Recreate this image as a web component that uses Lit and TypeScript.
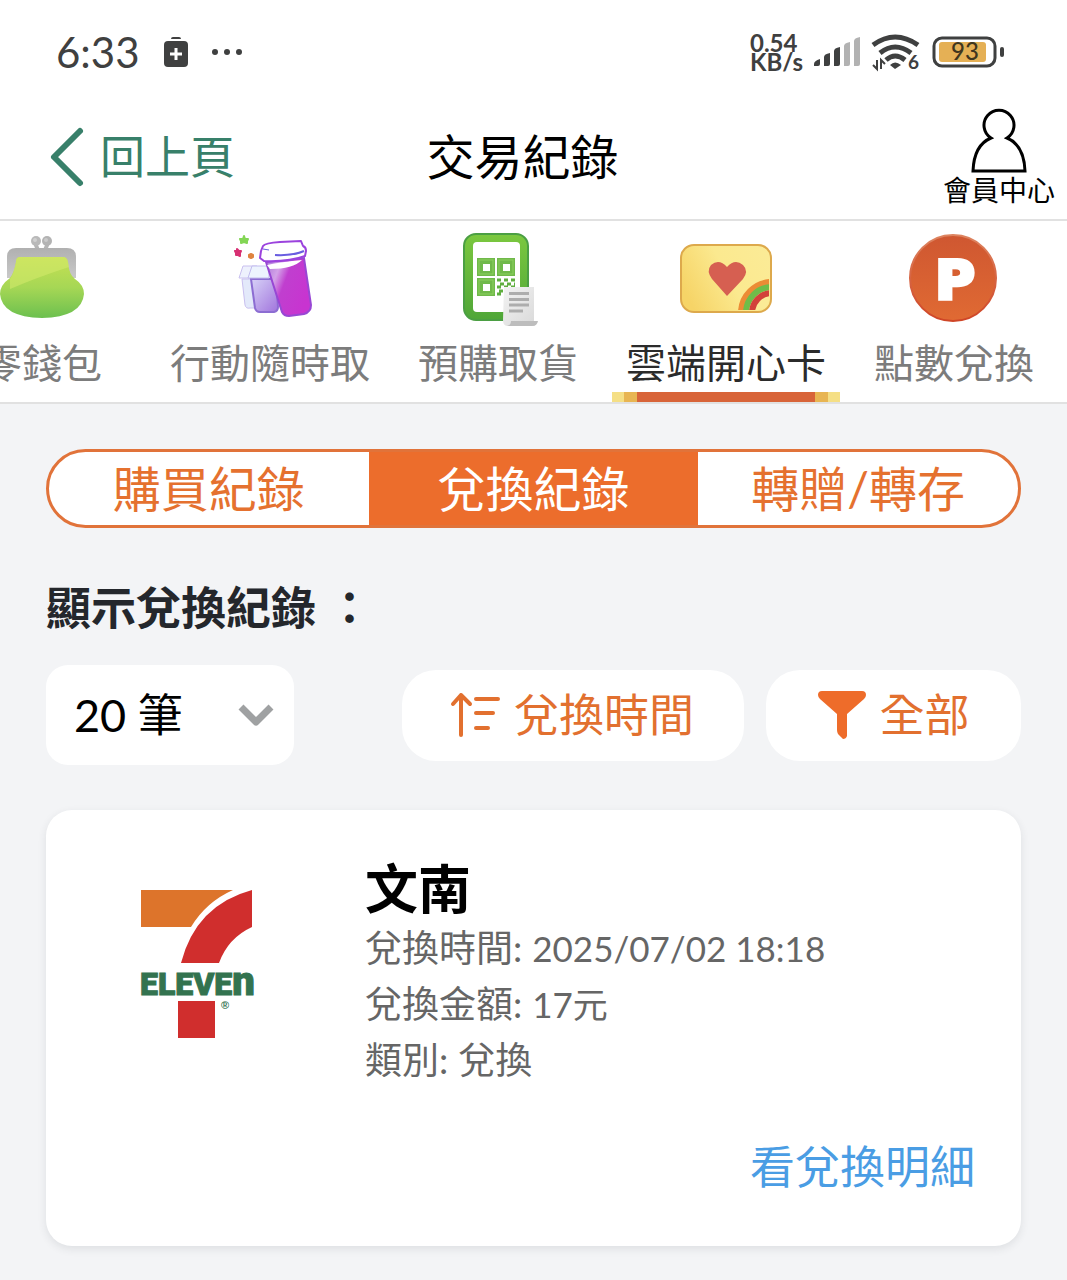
import { LitElement, html, svg, css } from "lit";
import { customElement, state } from "lit/decorators.js";
import { classMap } from "lit/directives/class-map.js";

const purseIcon = html`<svg class="icon" viewBox="-4 230 96 96" aria-hidden="true">
  <defs>
    <linearGradient id="purse-body" x1="0" y1="0" x2="0" y2="1">
      <stop offset="0" stop-color="#c6e052" /><stop offset="0.5" stop-color="#a6d755" /><stop offset="1" stop-color="#6cc04f" />
    </linearGradient>
    <linearGradient id="purse-frame" x1="0" y1="0" x2="0" y2="1">
      <stop offset="0" stop-color="#b0b0b0" /><stop offset="1" stop-color="#c9c9c9" />
    </linearGradient>
  </defs>
  <path d="M37 243l3 7M50 243l-3 7" stroke="#b5b5b5" stroke-width="4" />
  <circle cx="38" cy="241" r="5" fill="#b9b9b9" /><circle cx="49" cy="241" r="5" fill="#b3b3b3" />
  <circle cx="37" cy="240" r="2" fill="#d0d0d0" /><circle cx="48" cy="240" r="2" fill="#cacaca" />
  <path d="M9 278V257q0-9 9-9H69q9 0 9 9V278Z" fill="url(#purse-frame)" />
  <path d="M22 257H65Q69 257 70 262Q71 275 77 279Q86 285 86 294Q84 317 44 318Q4 317 2 294Q2 285 12 278Q16 273 18 262Q18 257 22 257Z" fill="url(#purse-body)" />
  <path d="M22 257H65Q69 257 70 262L71 267Q40 277 12 289V279Q16 273 18 262Q18 257 22 257Z" fill="#d2ea6b" opacity="0.6" />
</svg>`;

const cupsIcon = html`<svg class="icon" viewBox="223 230 96 96" aria-hidden="true">
  <defs>
    <linearGradient id="cup-front" x1="0" y1="0" x2="1" y2="0.5">
      <stop offset="0" stop-color="#a873d8" /><stop offset="0.3" stop-color="#d3a2e8" /><stop offset="0.5" stop-color="#c03fcf" /><stop offset="1" stop-color="#c834d0" />
    </linearGradient>
    <linearGradient id="cup-back" x1="0" y1="0" x2="1" y2="1">
      <stop offset="0" stop-color="#d7d2f7" /><stop offset="1" stop-color="#a174dd" />
    </linearGradient>
  </defs>
  <g stroke-width="2" stroke-linejoin="round">
    <path d="M245 236l1 3 3 0-1 2 0 2-3-1-3 1 0-2-1-2 3 0z" fill="#83d655" stroke="#83d655" />
    <path d="M238 249l2 2 2 0-1 2 0 3-2-1-2 0 0-2-1-2 2 0z" fill="#d73073" stroke="#d73073" />
    <path d="M252 254l2 1 0 2-2 1-2-1 0-2z" fill="#df8440" stroke="#df8440" />
  </g>
  <path d="M243 279L246 305Q247 309 251 308H258L254 279Z" fill="#e3e9fa" stroke="#c9c0ef" />
  <path d="M242 272l2-6H258V278H240Z" fill="#eef1fd" stroke="#c9c0ef" />
  <path d="M252 279L256 308Q257 312 261 312H275Q279 311 279 307L277 279Z" fill="url(#cup-back)" stroke="#8c6dd2" stroke-width="2" />
  <path d="M251 272l2-6H270V278H249Z" fill="#edf4fe" stroke="#c2bcee" />
  <path d="M267 262L283 312Q285 316 290 316L305 314Q312 312 312 305L305 258Z" fill="url(#cup-front)" stroke="#9847d4" stroke-width="2" />
  <path d="M268 265Q282 262 303 260Q294 269 271 269Z" fill="#fff" />
  <path d="M264 246Q266 243 281 242L302 241L304 246Q307 247 307 251L306 256Q290 262 265 261L261 258L262 251Z" fill="#fff" stroke="#9b43dd" stroke-width="2" stroke-linejoin="round" />
  <path d="M276 255Q294 256 305 251" fill="none" stroke="#695de0" stroke-width="2" />
  <path d="M264 249l6 1" stroke="#695de0" stroke-width="1" />
</svg>`;

const finder = (x: number, y: number) => svg`
  <rect x=${x} y=${y} width="18" height="18" fill="#70b94a" />
  <rect x=${x + 2} y=${y + 2} width="14" height="14" fill="none" stroke="#8bd05f" />
  <rect x=${x + 6} y=${y + 6} width="7" height="7" fill="#fff" />`;

const qrIcon = html`<svg class="icon" viewBox="451 230 96 96" aria-hidden="true">
  <defs>
    <linearGradient id="phone" x1="0" y1="0" x2="0" y2="1">
      <stop offset="0" stop-color="#7cc83f" /><stop offset="1" stop-color="#4fa638" />
    </linearGradient>
    <linearGradient id="paper" x1="0" y1="0" x2="1" y2="1">
      <stop offset="0" stop-color="#f3f3f3" /><stop offset="1" stop-color="#d8d8d8" />
    </linearGradient>
  </defs>
  <rect x="465" y="234" width="64" height="86" rx="12" fill="url(#phone)" stroke="#4b9f43" stroke-width="2" />
  <rect x="474" y="242" width="47" height="70" rx="4" fill="#fff" />
  ${finder(478, 258)}${finder(498, 258)}${finder(478, 278)}
  <path d="M498 280h18M501 284h15M498 287h18M500 291h12M498 294h8" stroke="#5fae3f" stroke-width="3" stroke-dasharray="4 3" />
  <path d="M505 287H535V321H538Q539 326 533 326H509Q504 326 504 320Z" fill="url(#paper)" />
  <path d="M512 321H539Q538 326 533 326H508Q512 325 512 321Z" fill="#bdbdbd" />
  <path d="M510 293.500h20M510 299.500h20M510 305h20M510 311h14" stroke="#adadad" stroke-width="3" />
</svg>`;

const cardIcon = html`<svg class="icon" viewBox="678 230 96 96" aria-hidden="true">
  <defs>
    <linearGradient id="gold" x1="0" y1="0.6" x2="1" y2="0.2">
      <stop offset="0" stop-color="#f6d467" /><stop offset="0.5" stop-color="#fbe98f" /><stop offset="1" stop-color="#fbeb96" />
    </linearGradient>
    <clipPath id="card-clip"><rect x="683" y="246" width="86" height="64" rx="11" /></clipPath>
  </defs>
  <rect x="681" y="245" width="90" height="67" rx="13" fill="url(#gold)" stroke="#dda94c" stroke-width="2" />
  <g clip-path="url(#card-clip)" fill="none" stroke-width="6">
    <circle cx="772" cy="313" r="20" fill="#fbeb96" stroke="none" />
    <circle cx="772" cy="313" r="31" stroke="#ec8c35" />
    <circle cx="772" cy="313" r="26" stroke="#6fbd49" />
    <circle cx="772" cy="313" r="20" stroke="#d2423a" />
  </g>
  <path d="M727 296L712 279Q706 271 711 265Q719 258 727 267Q735 258 743 265Q749 271 743 279Z" fill="#d65f51" />
</svg>`;

const pointIcon = html`<svg class="icon" viewBox="906 230 96 96" aria-hidden="true">
  <defs>
    <linearGradient id="coin" x1="0" y1="0" x2="0" y2="1">
      <stop offset="0" stop-color="#cf5731" /><stop offset="1" stop-color="#e06a33" />
    </linearGradient>
    <linearGradient id="coin-rim" x1="0" y1="0" x2="0" y2="1">
      <stop offset="0" stop-color="#dd8460" /><stop offset="1" stop-color="#cf4526" />
    </linearGradient>
  </defs>
  <circle cx="953" cy="278" r="43" fill="url(#coin)" stroke="url(#coin-rim)" stroke-width="2" />
  <text class="coin-letter" x="955" y="299" text-anchor="middle">P</text>
</svg>`;

const tabs = [
  { label: "零錢包", icon: purseIcon },
  { label: "行動隨時取", icon: cupsIcon },
  { label: "預購取貨", icon: qrIcon },
  { label: "雲端開心卡", icon: cardIcon },
  { label: "點數兌換", icon: pointIcon },
];

const segments = ["購買紀錄", "兌換紀錄", "轉贈/轉存"];

@customElement("status-bar")
class StatusBar extends LitElement {
  static styles = css`
    :host {
      display: flex;
      align-items: center;
      justify-content: space-between;
      height: 104px;
      padding: 0 63px 0 56px;
      color: #3f4040;
    }
    .group { display: flex; align-items: center; }
    .left { gap: 24px; }
    .right { gap: 11px; }
    svg { display: block; overflow: visible; }
    .clock { font-size: 42px; line-height: 48px; }
    .speed { font-size: 24px; font-weight: 700; line-height: 19px; }
    .speed span { display: block; }
    .six { font: 700 19px Lato, sans-serif; }
    .level { font: 500 24px Lato, sans-serif; }
  `;

  render() {
    return html`
      <div class="group left">
        <time class="clock">6:33</time>
        <svg width="24" height="30" viewBox="0 0 24 30" fill="#3f4040" aria-hidden="true">
          <path d="M7 2q0-2 2-2h6q2 0 2 2z" />
          <rect y="4" width="24" height="26" rx="4" />
          <path d="M12 11v12M6 17h12" stroke="#fff" stroke-width="3" />
        </svg>
        <svg width="30" height="6" viewBox="0 0 30 6" fill="#3f4040" aria-hidden="true">
          <circle cx="3" cy="3" r="3" /><circle cx="15" cy="3" r="3" /><circle cx="27" cy="3" r="3" />
        </svg>
      </div>
      <div class="group right">
        <div class="speed"><span>0.54</span><span>KB/s</span></div>
        <svg width="46" height="30" viewBox="0 0 46 30" aria-hidden="true">
          <g fill="#3f4040">
            <path d="M0 29v-2q0-3 6-5v5q0 2-2 2z" />
            <path d="M10 29V20q0-3 6-4v11q0 2-2 2z" />
            <path d="M20 29V14q0-3 6-4v17q0 2-2 2z" />
          </g>
          <g fill="#b2b2b2">
            <path d="M30 29V9q0-3 6-4v22q0 2-2 2z" />
            <path d="M40 29V4q0-3 6-4v27q0 2-2 2z" />
          </g>
        </svg>
        <svg width="50" height="36" viewBox="0 0 50 36" fill="none" stroke="#3f4040" aria-hidden="true">
          <path d="M2 11Q24-5 47 11" stroke-width="5" />
          <path d="M9 19Q24 7 40 19" stroke-width="5" />
          <path d="M15 26Q24 18 34 26" stroke-width="5" />
          <path d="M19 31Q24 26 30 31L24 35Z" fill="#3f4040" stroke="none" />
          <path d="M6 26V35L2 31M10 35V26L14 30" stroke-width="2" />
          <text class="six" x="37" y="35" fill="#3f4040" stroke="none">6</text>
        </svg>
        <svg width="72" height="32" viewBox="0 0 72 32" aria-hidden="true">
          <rect x="2" y="2" width="61" height="28" rx="8" fill="#fff" stroke="#3f4040" stroke-width="3" />
          <rect x="7" y="6" width="47" height="20" rx="3" fill="#e5b055" />
          <rect x="68" y="11" width="4" height="10" rx="2" fill="#3f4040" />
          <text class="level" x="33" y="24" text-anchor="middle" fill="#40361f">93</text>
        </svg>
      </div>
    `;
  }
}

@customElement("record-card")
class RecordCard extends LitElement {
  static styles = css`
    :host {
      display: grid;
      grid-template-columns: 112px 1fr;
      column-gap: 112px;
      padding: 48px 46px 51px 95px;
      border-radius: 26px;
      background: #fff;
      box-shadow: 0 3px 8px rgba(40, 50, 60, 0.1);
    }
    .logo { display: block; width: 112px; height: 150px; margin-top: 31px; overflow: visible; }
    .wordmark { font: 900 32px Roboto, sans-serif; fill: #33734f; stroke: #33734f; stroke-width: 1px; }
    .tail { font-size: 40px; }
    .mark { font: 700 11px "Liberation Sans", sans-serif; }
    h2 { margin: 0; font-size: 53px; line-height: 62px; color: #000; }
    dl { margin: 0; }
    .row { display: flex; gap: 10px; font-size: 37px; line-height: 56px; color: #666; }
    dt, dd { margin: 0; }
    .figure { font-size: 35px; }
    .more {
      grid-column: 1 / -1;
      justify-self: end;
      margin-top: 51px;
      font-size: 45px;
      line-height: 56px;
      color: #4a9de4;
      text-decoration: none;
    }
  `;

  render() {
    return html`
      <svg class="logo" viewBox="0 0 112 150" role="img" aria-label="7-ELEVEn">
        <path d="M0 1H92Q65 13 50 38H0Z" fill="#dd742b" />
        <path d="M111 1V38Q87 49 78 74H40Q55 16 111 1Z" fill="#d02e2d" />
        <rect x="37" y="112" width="37" height="37" fill="#d02e2d" />
        <text class="wordmark" x="-1" y="106">ELEVE<tspan class="tail">n</tspan></text>
        <text class="mark" x="80" y="120" fill="#33734f">®</text>
      </svg>
      <div>
        <h2>文南</h2>
        <dl>
          <div class="row"><dt>兌換時間:</dt><dd class="figure">2025/07/02 18:18</dd></div>
          <div class="row"><dt>兌換金額:</dt><dd class="figure">17元</dd></div>
          <div class="row"><dt>類別:</dt><dd>兌換</dd></div>
        </dl>
      </div>
      <a class="more" href="#detail">看兌換明細</a>
    `;
  }
}

@customElement("app-root")
class AppRoot extends LitElement {
  static styles = css`
    :host {
      display: block;
      min-height: 100vh;
      background: #f3f4f6;
      color: #000;
      font-family: Lato, "Noto Sans CJK TC", sans-serif;
    }
    * { box-sizing: border-box; }
    button, select { font: inherit; border: 0; cursor: pointer; }
    a { text-decoration: none; }
    svg { display: block; flex: none; overflow: visible; }
    .top { background: #fff; }
    .header {
      display: grid;
      grid-template-columns: 13fr auto 15fr;
      align-items: center;
      height: 117px;
      padding: 0 12px 10px 48px;
      border-bottom: 2px solid #e1e1e1;
    }
    .back { display: flex; align-items: center; gap: 16px; color: #38806a; font-size: 45px; line-height: 56px; }
    h1 { margin: 0; font-size: 48px; font-weight: 400; line-height: 56px; }
    .member { justify-self: end; display: flex; flex-direction: column; align-items: center; color: #000; font-size: 28px; line-height: 34px; }
    .tabs {
      display: flex;
      justify-content: flex-end;
      gap: 20px;
      padding-right: 19px;
      overflow: hidden;
      border-bottom: 2px solid #e1e1e1;
    }
    .tab {
      flex: none;
      display: flex;
      flex-direction: column;
      align-items: center;
      min-width: 188px;
      padding: 9px 14px 0;
      background: none;
      color: #7c7c7c;
      font-size: 40px;
      line-height: 48px;
    }
    .tab::after { content: ""; align-self: stretch; height: 10px; margin: 5px -14px 0; }
    .tab .icon { margin-bottom: 13px; }
    .tab.on { color: #2b2b2b; }
    .tab.on::after {
      background: linear-gradient(90deg,
        #f5df85 12px, #e8b552 12px 25px, #d86439 25px calc(100% - 25px),
        #e8b552 calc(100% - 25px) calc(100% - 12px), #f5df85 calc(100% - 12px));
    }
    .icon { width: 96px; height: 96px; }
    .coin-letter { font: 700 54px "DejaVu Sans", sans-serif; fill: #fff; stroke: #fff; stroke-width: 4px; }
    main { padding: 45px 46px 34px; }
    .segments {
      display: grid;
      grid-template-columns: 32fr 33fr 32fr;
      height: 79px;
      border: 3px solid #e1733a;
      border-radius: 40px;
      overflow: hidden;
      background: #fff;
    }
    .segment { padding: 0; background: none; color: #e5712f; font-size: 48px; line-height: 56px; }
    .segment.on { background: #ec6d2c; color: #fff; }
    .caption { display: block; margin-top: 52px; color: #24272c; font-size: 45px; font-weight: 700; line-height: 56px; }
    .filters { display: flex; align-items: center; gap: 22px; margin-top: 29px; }
    .picker { display: grid; align-items: center; margin-right: auto; width: 248px; }
    .picker > * { grid-area: 1 / 1; }
    .picker svg { justify-self: end; margin-right: 20px; pointer-events: none; }
    select {
      appearance: none;
      width: 100%;
      height: 100px;
      padding: 0 64px 0 28px;
      border-radius: 22px;
      background: #fff;
      color: #000;
      font-size: 45px;
    }
    .pill {
      display: flex;
      align-items: center;
      justify-content: center;
      gap: 12px;
      min-width: 255px;
      height: 91px;
      padding: 0 50px;
      border-radius: 34px;
      background: #fff;
      color: #e2702f;
      font-size: 45px;
      line-height: 56px;
    }
    record-card { margin-top: 45px; }
  `;

  @state() private tab = 3;
  @state() private segment = 1;

  render() {
    return html`
      <div class="top">
        <status-bar></status-bar>
        <header class="header">
          <a class="back" href="#back">
            <svg width="36" height="60" viewBox="0 0 36 60" fill="none" stroke="#38806a" stroke-width="6" stroke-linecap="round" stroke-linejoin="round" aria-hidden="true">
              <path d="M32 4L6 30L32 56" />
            </svg>
            回上頁
          </a>
          <h1>交易紀錄</h1>
          <a class="member" href="#member">
            <svg width="56" height="66" viewBox="0 0 56 66" fill="none" stroke="#000" stroke-width="3" aria-hidden="true">
              <path d="M20 31A15 15 0 1 1 36 31Q53 38 54 64H2Q3 38 20 31Z" />
            </svg>
            會員中心
          </a>
        </header>
        <nav class="tabs">
          ${tabs.map((t, i) => html`
            <button class=${classMap({ tab: true, on: i === this.tab })} @click=${() => (this.tab = i)}>
              ${t.icon}<span>${t.label}</span>
            </button>`)}
        </nav>
      </div>
      <main>
        <div class="segments">
          ${segments.map((s, i) => html`
            <button class=${classMap({ segment: true, on: i === this.segment })} @click=${() => (this.segment = i)}>${s}</button>`)}
        </div>
        <label class="caption" for="count">顯示兌換紀錄 ：</label>
        <div class="filters">
          <div class="picker">
            <select id="count">
              <option>20 筆</option>
              <option>50 筆</option>
            </select>
            <svg width="36" height="24" viewBox="0 0 36 24" fill="none" stroke="#9fa1a2" stroke-width="7" aria-hidden="true">
              <path d="M3 4L18 19L33 4" stroke-linejoin="round" />
            </svg>
          </div>
          <button class="pill">
            <svg width="50" height="48" viewBox="0 0 50 48" fill="none" stroke="#e2702f" stroke-width="4" stroke-linecap="round" stroke-linejoin="round" aria-hidden="true">
              <path d="M9 44V4M1 13L9 4L18 13M24 8H46M24 22H41M24 37H36" />
            </svg>
            兌換時間
          </button>
          <button class="pill">
            <svg width="50" height="48" viewBox="0 0 50 48" fill="#ee6c2a" aria-hidden="true">
              <path d="M5 0H45Q49 0 49 4Q49 6 47 8L30 23V45Q29 48 26 48L21 43Q20 41 20 39V23L3 8Q1 6 1 4Q1 0 5 0Z" />
            </svg>
            全部
          </button>
        </div>
        <record-card></record-card>
      </main>
    `;
  }
}
